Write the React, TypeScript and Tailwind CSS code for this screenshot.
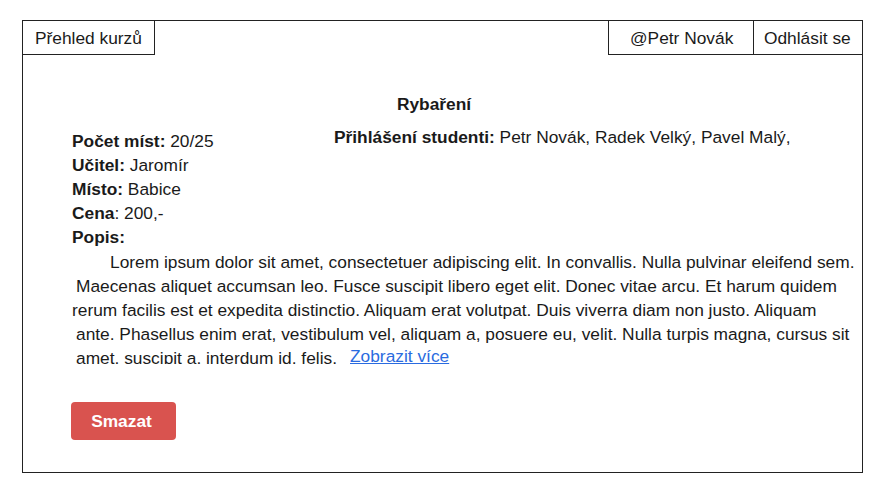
import React from "react";

export default function App() {
  const font = { fontFamily: '"Liberation Sans", Arial, sans-serif' };
  return (
    <div className="w-[890px] h-[492px] bg-white pt-[20px] pl-[22px]" style={font}>
      <div className="w-[841px] h-[453px] border border-[#222] text-[17.33px] leading-[24px] text-[#1a1a1a] flex flex-col">
        <div className="flex justify-between h-[35px]">
          <div className="h-[35px] w-[133px] border-r border-b border-[#222] flex items-center pl-[12px] -mt-px -ml-px border-t border-l">
            Přehled kurzů
          </div>
          <div className="flex -mt-px -mr-px">
            <div className="h-[35px] w-[146px] border border-[#222] flex items-center pl-[21px]">@Petr Novák</div>
            <div className="h-[35px] w-[109px] border border-l-0 border-[#222] flex items-center pl-[10px]">Odhlásit se</div>
          </div>
        </div>
        <div className="pl-[49px] pt-[36px]">
          <div className="w-[724px] text-center font-bold">Rybaření</div>
          <div className="flex mt-[9px]">
            <div className="w-[262px] pt-[4px]">
              <div><b>Počet míst:</b> 20/25</div>
              <div><b>Učitel:</b> Jaromír</div>
              <div><b>Místo:</b> Babice</div>
              <div><b>Cena</b>: 200,-</div>
              <div><b>Popis:</b></div>
            </div>
            <div className="whitespace-nowrap"><b>Přihlášení studenti:</b> Petr Novák, Radek Velký, Pavel Malý,</div>
          </div>
          <div className="whitespace-pre mt-[1px]">
            <div className="pl-[38px]">Lorem ipsum dolor sit amet, consectetuer adipiscing elit. In convallis. Nulla pulvinar eleifend sem.</div>
            <div className="pl-[4px]">Maecenas aliquet accumsan leo. Fusce suscipit libero eget elit. Donec vitae arcu. Et harum quidem</div>
            <div>rerum facilis est et expedita distinctio. Aliquam erat volutpat. Duis viverra diam non justo. Aliquam</div>
            <div className="pl-[4px]">ante. Phasellus enim erat, vestibulum vel, aliquam a, posuere eu, velit. Nulla turpis magna, cursus sit</div>
            <div className="pl-[4px] flex items-start h-[24px]">
              <div className="h-[18px] overflow-hidden">amet, suscipit a, interdum id, felis.</div>
              <a href="#" className="ml-[13px] -mt-[2px] text-[#2a6be0] underline">Zobrazit více</a>
            </div>
          </div>
          <button className="mt-[32px] -ml-px w-[105px] h-[38px] bg-[#d9534f] rounded-[4px] text-white font-bold text-[17.33px] pr-[4px]">
            Smazat
          </button>
        </div>
      </div>
    </div>
  );
}
